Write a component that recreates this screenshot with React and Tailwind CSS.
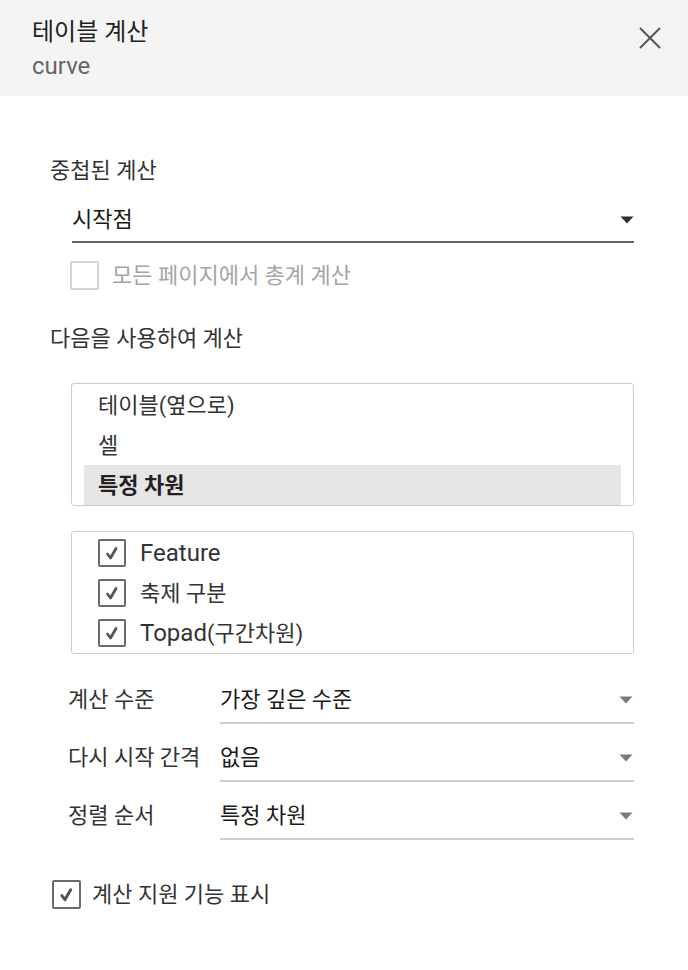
import React from "react";

const font = { fontFamily: "Roboto, 'Noto Sans CJK KR', sans-serif" };

function Check({ size = 28, disabled = false, checked = true }) {
  return (
    <div
      className={`shrink-0 rounded-[2px] border-2 bg-white flex items-center justify-center ${disabled ? "border-[#d4d4d4]" : "border-[#6a6a6a]"}`}
      style={{ width: size, height: size }}
    >
      {checked && (
        <svg width={size - 4} height={size - 4} viewBox="0 0 24 24" fill="none">
          <path d="M7.5 13 L10.5 17 L16 7.5" stroke="#555" strokeWidth="2.8" strokeLinecap="round" strokeLinejoin="round" />
        </svg>
      )}
    </div>
  );
}

function Tri({ dark = false }) {
  return (
    <svg width="14" height="8" viewBox="0 0 14 8" className="shrink-0">
      <path d="M0.5 0.5 H13.5 L7 7.5 Z" fill={dark ? "#2e2e2e" : "#7a7a7a"} />
    </svg>
  );
}

function Row({ label, value }) {
  return (
    <div className="flex items-start">
      <div className="w-[152px] shrink-0 text-[22px] leading-[28px] text-[#333] whitespace-nowrap">{label}</div>
      <div className="flex-1 flex items-center justify-between pb-[8px] border-b-2 border-[#cfcfcf] pr-[1px]">
        <span className="text-[22px] leading-[28px] text-[#1a1a1a]">{value}</span>
        <Tri />
      </div>
    </div>
  );
}

export default function App() {
  return (
    <div className="w-[688px] h-[970px] bg-white text-[#333]" style={font}>
      <div className="h-[96px] bg-[#f4f4f4] px-[32px] pt-[16px] flex justify-between">
        <div>
          <div className="text-[24px] leading-[32px] text-[#222]">테이블 계산</div>
          <div className="text-[24px] leading-[28px] text-[#666] mt-[4px]">curve</div>
        </div>
        <svg width="24" height="24" viewBox="0 0 24 24" className="mt-[10px] mr-[-6px]">
          <path d="M2 2 L22 22 M22 2 L2 22" stroke="#555" strokeWidth="2" />
        </svg>
      </div>

      <div className="pt-[61px] pl-[50px] pr-[54px]">
        <div className="text-[22px] leading-[28px]">중첩된 계산</div>

        <div className="ml-[22px] mt-[20px] flex items-center justify-between pt-[1px] pb-[7px] border-b-2 border-[#666]">
          <span className="text-[22px] leading-[28px] text-[#1a1a1a]">시작점</span>
          <Tri dark />
        </div>

        <div className="ml-[20px] mt-[18px] flex items-center gap-[13px]">
          <Check size={29} disabled checked={false} />
          <span className="text-[22px] leading-[28px] text-[#a5a5a5]">모든 페이지에서 총계 계산</span>
        </div>

        <div className="mt-[35px] text-[22px] leading-[28px]">다음을 사용하여 계산</div>

        <div className="ml-[21px] mt-[30px] border border-[#cccccc] rounded-[3px] px-[12px] pt-[1px] h-[123px] overflow-hidden">
          <div className="h-[40px] px-[14px] flex items-center text-[22px] text-[#333]">테이블(옆으로)</div>
          <div className="h-[40px] px-[14px] flex items-center text-[22px] text-[#333]">셀</div>
          <div className="h-[40px] px-[14px] flex items-center text-[22px] text-[#222] font-bold bg-[#e6e6e6]">특정 차원</div>
        </div>

        <div className="ml-[21px] mt-[25px] border border-[#cccccc] rounded-[3px] pl-[26px] pt-[1px] h-[123px] overflow-hidden">
          <div className="h-[40px] flex items-center gap-[14px]">
            <Check size={28} />
            <span className="text-[24px] text-[#333]">Feature</span>
          </div>
          <div className="h-[40px] flex items-center gap-[14px]">
            <Check size={28} />
            <span className="text-[22px] text-[#333]">축제 구분</span>
          </div>
          <div className="h-[40px] flex items-center gap-[14px]">
            <Check size={28} />
            <span className="text-[22px] text-[#333]"><span className="text-[24px]">Topad</span>(구간차원)</span>
          </div>
        </div>

        <div className="ml-[18px] mt-[32px] flex flex-col gap-[20px]">
          <Row label="계산 수준" value="가장 깊은 수준" />
          <Row label="다시 시작 간격" value="없음" />
          <Row label="정렬 순서" value="특정 차원" />
        </div>

        <div className="ml-[2px] mt-[40px] flex items-center gap-[11px]">
          <Check size={29} />
          <span className="text-[22px] leading-[28px] text-[#333]">계산 지원 기능 표시</span>
        </div>
      </div>
    </div>
  );
}
